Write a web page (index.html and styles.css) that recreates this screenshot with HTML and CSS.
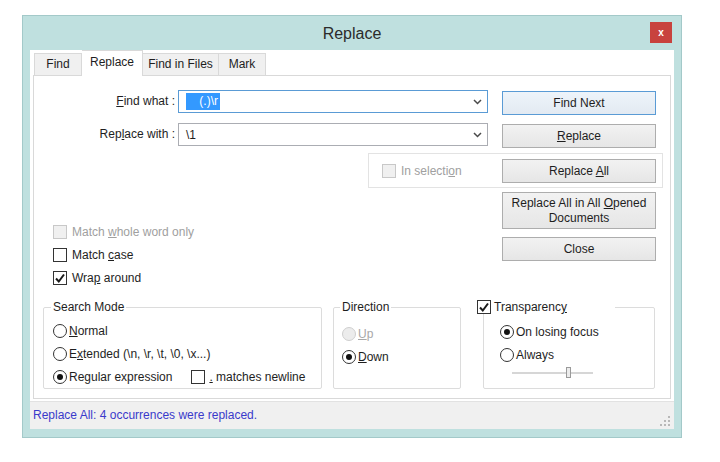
FILE: index.html
```html
<!DOCTYPE html>
<html lang="en">
<head>
    <meta charset="UTF-8">
    <title>Replace</title>
    <link rel="stylesheet" href="styles.css">
</head>
<body>
    <div class="window">
        <div class="titlebar">
            <span class="title">Replace</span>
            <button class="close-btn">x</button>
        </div>
        <div class="client">
            <!-- tab strip -->
            <div class="tabs">
                <div class="tab tab-find">Find</div>
                <div class="tab tab-replace active">Replace</div>
                <div class="tab tab-files">Find in Files</div>
                <div class="tab tab-mark">Mark</div>
            </div>

            <div class="panel">
                <div class="row">
                    <label class="field-label"><u>F</u>ind what :</label>
                    <div class="combo focused">
                        <span class="sel">    (.)\r</span>
                        <svg class="chevron" width="9" height="6" viewBox="0 0 9 6"><path d="M1 1 L4.5 4.5 L8 1" fill="none" stroke="#4a4a4a" stroke-width="1.5"/></svg>
                    </div>
                    <button class="btn default">Find Next</button>
                </div>
                <div class="row">
                    <label class="field-label">Rep<u>l</u>ace with :</label>
                    <div class="combo">
                        <span>\1</span>
                        <svg class="chevron" width="9" height="6" viewBox="0 0 9 6"><path d="M1 1 L4.5 4.5 L8 1" fill="none" stroke="#4a4a4a" stroke-width="1.5"/></svg>
                    </div>
                    <button class="btn"><u>R</u>eplace</button>
                </div>

                <div class="selection-frame">
                    <span class="check disabled"><span class="box"></span><span>In selecti<u>o</u>n</span></span>
                    <button class="btn">Replace <u>A</u>ll</button>
                </div>

                <div class="middle">
                    <div class="options">
                        <span class="check disabled"><span class="box"></span><span>Match <u>w</u>hole word only</span></span>
                        <span class="check"><span class="box"></span><span>Match <u>c</u>ase</span></span>
                        <span class="check"><span class="box checked"><svg width="12" height="12" viewBox="0 0 12 12"><path d="M2 6.5 L4.8 9.5 L10 2.5" fill="none" stroke="#1a1a1a" stroke-width="2"/></svg></span><span>Wra<u>p</u> around</span></span>
                    </div>
                    <div class="side-buttons">
                        <button class="btn tall"><span>Replace All in All <u>O</u>pened</span><br><span>Documents</span></button>
                        <button class="btn close-action">Close</button>
                    </div>
                </div>

                <div class="groups">
                    <fieldset class="group search-mode">
                        <legend>Search Mode</legend>
                        <span class="radio"><span class="dot"></span><span><u>N</u>ormal</span></span>
                        <span class="radio"><span class="dot"></span><span>E<u>x</u>tended (\n, \r, \t, \0, \x...)</span></span>
                        <span class="radio-line">
                            <span class="radio"><span class="dot on"></span><span>Re<u>g</u>ular expression</span></span>
                            <span class="check newline"><span class="box"></span><span><u>.</u> matches newline</span></span>
                        </span>
                    </fieldset>
                    <fieldset class="group direction">
                        <legend>Direction</legend>
                        <span class="radio disabled"><span class="dot"></span><span><u>U</u>p</span></span>
                        <span class="radio"><span class="dot on"></span><span><u>D</u>own</span></span>
                    </fieldset>
                    <fieldset class="group transparency">
                        <legend><span class="check"><span class="box checked"><svg width="12" height="12" viewBox="0 0 12 12"><path d="M2 6.5 L4.8 9.5 L10 2.5" fill="none" stroke="#1a1a1a" stroke-width="2"/></svg></span><span>Transparenc<u>y</u></span></span></legend>
                        <span class="radio"><span class="dot on"></span><span>On losing focus</span></span>
                        <span class="radio"><span class="dot"></span><span>Always</span></span>
                        <div class="slider"><span class="thumb"></span></div>
                    </fieldset>
                </div>
            </div>

            <div class="statusbar">
                <span class="status-text">Replace All: 4 occurrences were replaced.</span>
                <svg class="grip" width="10" height="10" viewBox="0 0 10 10">
                    <rect x="8" y="0" width="2" height="2" fill="#b8b8b8"/>
                    <rect x="4" y="4" width="2" height="2" fill="#b8b8b8"/>
                    <rect x="8" y="4" width="2" height="2" fill="#b8b8b8"/>
                    <rect x="0" y="8" width="2" height="2" fill="#b8b8b8"/>
                    <rect x="4" y="8" width="2" height="2" fill="#b8b8b8"/>
                    <rect x="8" y="8" width="2" height="2" fill="#b8b8b8"/>
                </svg>
            </div>
        </div>
    </div>
</body>
</html>
```

FILE: styles.css
```css
body {
    margin: 0;
    background-color: #fff;
    font-family: 'Liberation Sans', Arial, sans-serif;
    font-size: 12px;
    color: #1e1e1e;
}

u {
    text-decoration: underline;
    text-underline-offset: 1px;
}

/* Window frame */
.window {
    margin: 15px 0 0 22px;
    width: 660px;
    height: 423px;
    box-sizing: border-box;
    border: 1px solid #a3c9c9;
    background-color: #bfe0df; /* light teal frame */
    padding: 0 7px 8px 7px;
    display: flex;
    flex-direction: column;
}

.titlebar {
    height: 34px;
    display: grid;
    grid-template-columns: 1fr auto 1fr;
    align-items: center;
}

.title {
    grid-column: 2;
    font-size: 16px;
    color: #2b2b2b;
    padding-top: 1px;
}

.close-btn {
    grid-column: 3;
    justify-self: end;
    align-self: start;
    margin: 6px 2px 0 0;
    width: 22px;
    height: 21px;
    padding: 0;
    border: none;
    background-color: #c8423e;
    color: #fff;
    font-family: 'Liberation Sans', Arial, sans-serif;
    font-size: 10px;
    font-weight: bold;
    line-height: 19px;
}

.client {
    flex: 1;
    background-color: #fff;
    display: flex;
    flex-direction: column;
}

/* Tabs */
.tabs {
    height: 25px;
    display: flex;
    align-items: flex-end;
    padding-left: 4px;
}

.tab {
    height: 22px;
    box-sizing: border-box;
    border: 1px solid #d9d9d9;
    border-bottom: none;
    background-color: #f0f0f0;
    line-height: 21px;
    text-align: center;
}

.tab-find { width: 48px; }
.tab-replace { width: 61px; }
.tab-files { width: 76px; border-left: none; }
.tab-mark { width: 47px; border-left: none; }

.tab.active {
    height: 26px;
    margin-bottom: -1px;
    background-color: #fff;
    position: relative;
    z-index: 1;
    line-height: 22px;
    border-left: none;
}

.panel {
    margin: 0 3px;
    height: 324px;
    box-sizing: border-box;
    border: 1px solid #d9d9d9;
    padding-top: 14px;
}

/* Find / replace rows */
.row {
    display: flex;
    align-items: flex-start;
    height: 25px;
    margin-bottom: 8px;
}

.field-label {
    width: 141px;
    margin-right: 3px;
    text-align: right;
    line-height: 23px;
}

.combo {
    width: 310px;
    height: 23px;
    box-sizing: border-box;
    border: 1px solid #abadb3;
    display: flex;
    align-items: center;
    padding-left: 7px;
    white-space: pre;
}

.combo.focused {
    border-color: #5a9bd5;
}

.sel {
    background-color: #3399ff;
    color: #fff;
    line-height: 17px;
    padding-right: 2px;
}

.chevron {
    margin-left: auto;
    margin-right: 5px;
}

.btn {
    width: 154px;
    height: 24px;
    box-sizing: border-box;
    border: 1px solid #adadad;
    background: linear-gradient(#f2f2f2, #e6e6e6);
    font-family: 'Liberation Sans', Arial, sans-serif;
    font-size: 12px;
    color: #1e1e1e;
    padding: 0;
}

.row .btn {
    margin-left: 14px;
    margin-top: 1px;
}

.btn.default {
    border-color: #5a9bd5;
    background: linear-gradient(#eef4fa, #e3eaf2);
}

.btn.tall {
    height: 37px;
    line-height: 15px;
    padding: 0 4px;
}

.close-action {
    margin-top: 8px;
}

/* In selection frame */
.selection-frame {
    margin: -3px 0 0 334px;
    width: 295px;
    height: 35px;
    box-sizing: border-box;
    border: 1px solid #e3e3e3;
    display: flex;
    align-items: center;
    padding: 0 6px 0 13px;
}

.selection-frame .btn {
    margin-left: auto;
}

/* Checkboxes and radios */
.check, .radio {
    display: inline-flex;
    align-items: center;
    height: 23px;
    white-space: nowrap;
}

.box {
    width: 14px;
    height: 14px;
    box-sizing: border-box;
    border: 1px solid #333;
    background-color: #fff;
    margin-right: 5px;
    display: inline-flex;
    align-items: center;
    justify-content: center;
}

.check.disabled {
    color: #a0a0a0;
}

.check.disabled .box {
    border-color: #c8c8c8;
    background-color: #f0f0f0;
}

.dot {
    width: 14px;
    height: 14px;
    box-sizing: border-box;
    border: 1px solid #333;
    border-radius: 50%;
    background-color: #fff;
    margin-right: 2px;
    display: inline-flex;
    align-items: center;
    justify-content: center;
}

.dot.on::after {
    content: "";
    width: 6px;
    height: 6px;
    border-radius: 50%;
    background-color: #111;
}

.radio.disabled {
    color: #a8a8a8;
}

.radio.disabled .dot {
    border-color: #cfcfcf;
    background-color: #ececec;
}

/* Middle section: options + buttons */
.middle {
    margin-top: 4px;
    height: 97px;
    display: flex;
}

.options {
    flex: 1;
    display: flex;
    flex-direction: column;
    justify-content: flex-end;
    align-items: flex-start;
    padding-left: 19px;
}

.side-buttons {
    width: 154px;
    margin-right: 14px;
    display: flex;
    flex-direction: column;
}

/* Group boxes */
.groups {
    margin-top: 11px;
    padding-left: 9px;
    display: flex;
}

.group {
    margin: 0;
    border: 1px solid #dcdcdc;
    border-radius: 2px;
    display: flex;
    flex-direction: column;
    align-items: flex-start;
    min-width: 0;
}

.group legend {
    padding: 0 2px;
    margin-left: -2px;
    line-height: 14px;
}

.search-mode {
    width: 279px;
    box-sizing: border-box;
    padding: 5px 0 0 9px;
}

.radio-line {
    display: flex;
    align-items: center;
}

.newline {
    margin-left: 19px;
}

.newline .box {
    margin-right: 4px;
}

.direction {
    width: 128px;
    box-sizing: border-box;
    margin-left: 11px;
    padding: 8px 0 0 8px;
}

.transparency {
    width: 172px;
    box-sizing: border-box;
    margin-left: 22px;
    padding: 6px 0 0 16px;
}

.transparency legend {
    margin-left: -23px;
    width: 138px;
    padding: 0;
    height: 14px;
}

.transparency legend .check {
    height: 14px;
}

.transparency legend .box {
    margin-right: 3px;
}

.slider {
    margin: 1px 0 0 12px;
    width: 81px;
    height: 12px;
    position: relative;
    background: linear-gradient(#fff 5px, #d6d6d6 5px, #d6d6d6 7px, #fff 7px);
}

.slider .thumb {
    position: absolute;
    left: 54px;
    top: 0;
    width: 5px;
    height: 11px;
    box-sizing: border-box;
    border: 1px solid #9a9a9a;
    background-color: #ececec;
}

/* Status bar */
.statusbar {
    margin-top: 2px;
    flex: 1;
    border-top: 1px solid #e2e2e2;
    background-color: #f0f0f0;
    display: flex;
    align-items: center;
    padding: 0 4px 0 3px;
}

.status-text {
    color: #3a3acb;
    padding-bottom: 2px;
}

.grip {
    margin-left: auto;
    align-self: flex-end;
    margin-bottom: 3px;
}
```
